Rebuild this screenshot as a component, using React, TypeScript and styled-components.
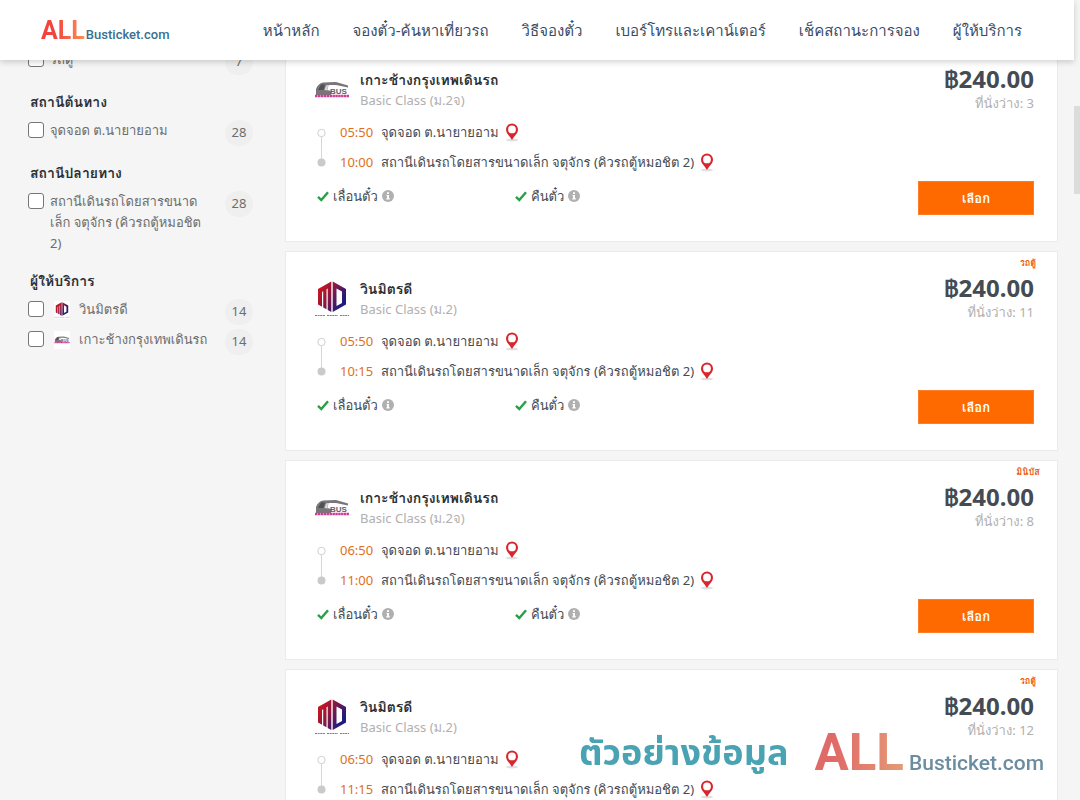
import React from 'react';
import styled, { createGlobalStyle } from 'styled-components';

const uiFont = '"Noto Sans", Loma, sans-serif';
const looplessFont = '"Noto Sans", "Noto Sans Thai", sans-serif';

const GlobalStyle = createGlobalStyle`
  *, *::before, *::after { box-sizing: border-box; }
  body {
    margin: 0;
    background: #f5f5f5;
    color: #444b52;
    font-family: ${uiFont};
    font-size: 13px;
  }
`;

const Shell = styled.div`
  height: 100vh;
  overflow: hidden;
  padding-right: 6px;
`;

const Header = styled.header`
  position: relative;
  z-index: 2;
  display: flex;
  align-items: center;
  justify-content: space-between;
  height: 60px;
  padding: 0 52px 0 41px;
  background: #fff;
  box-shadow: 0 2px 6px rgba(0, 0, 0, 0.18);
`;

const Brand = styled.a<{ $large?: boolean }>`
  display: flex;
  align-items: baseline;
  gap: ${p => (p.$large ? 5 : 1)}px;
  font-family: Roboto, sans-serif;
  font-weight: 500;
  font-size: ${p => (p.$large ? 21 : 13)}px;
  line-height: 1;
  color: ${p => (p.$large ? '#6b8da0' : '#3a6f90')};
  text-decoration: none;
  white-space: nowrap;
`;

const BrandAll = styled.span<{ $large?: boolean }>`
  font-weight: 700;
  font-size: ${p => (p.$large ? 51 : 25)}px;
  background: ${p =>
    p.$large
      ? 'linear-gradient(90deg, #e06a68 20%, #e49a76)'
      : 'linear-gradient(90deg, #f4423c 30%, #fb9058)'};
  background-clip: text;
  -webkit-background-clip: text;
  color: transparent;
`;

const Nav = styled.nav`
  display: flex;
  gap: 33px;
`;

const NavLink = styled.a`
  color: #3b4a66;
  font-size: 15px;
  line-height: 24px;
  text-decoration: none;
  white-space: nowrap;
`;

const Content = styled.div`
  display: flex;
  align-items: flex-start;
  gap: 32px;
  margin-top: -18px;
  padding: 0 16px 0 28px;
`;

const Sidebar = styled.aside`
  flex: 0 0 225px;
  padding-top: 7px;
`;

const FilterGroup = styled.section`
  margin-bottom: 13px;
`;

const FilterTitle = styled.h3`
  margin: 0 0 8px 2px;
  color: #2b2f33;
  font-size: 14px;
  line-height: 20px;
  font-weight: 700;
`;

const FilterRow = styled.label`
  display: flex;
  align-items: flex-start;
  min-height: 30px;
  padding-bottom: 4px;
  color: #6d6d6d;
  line-height: 21px;
`;

const Checkbox = styled.input`
  appearance: none;
  flex: none;
  width: 16px;
  height: 16px;
  margin: 2px 6px 0 0;
  border: 1px solid #767676;
  border-radius: 3px;
  background: #fff;
`;

const FilterLogo = styled.span`
  flex: none;
  display: flex;
  align-items: center;
  justify-content: center;
  width: 16px;
  height: 18px;
  margin: 2px 9px 0 4px;
  background: #fff;
`;

const FilterName = styled.span`
  flex: 1;
  min-width: 0;
  padding-right: 17px;
`;

const Count = styled.span`
  flex: none;
  width: 28px;
  height: 26px;
  border-radius: 13px;
  background: #efefef;
  line-height: 25px;
  text-align: center;
`;

const Results = styled.main`
  flex: 1;
  min-width: 0;
  display: flex;
  flex-direction: column;
  gap: 9px;
`;

const Card = styled.article`
  position: relative;
  display: flex;
  justify-content: space-between;
  min-height: 200px;
  padding: 0 23px 26px 28px;
  background: #fff;
  border: 1px solid #ebebeb;
`;

const Trip = styled.div`
  padding-top: 27px;
`;

const Provider = styled.div`
  display: flex;
  gap: 10px;
  height: 40px;
`;

const ProviderName = styled.h2`
  margin: 0;
  color: #2b2f33;
  font-size: 14px;
  line-height: 20px;
  font-weight: 700;
`;

const Muted = styled.p`
  margin: 0;
  color: #b0b0b0;
  line-height: 20px;
`;

const Route = styled.div`
  display: flex;
  gap: 14px;
  align-items: center;
  margin-top: 7px;
  padding-left: 3px;
`;

const Stop = styled.div`
  display: flex;
  align-items: center;
  height: 30px;
  white-space: nowrap;
`;

const Time = styled.time`
  width: 41px;
  color: #e0701c;
`;

const Place = styled.span`
  margin-right: 6px;
`;

const Perks = styled.div`
  display: grid;
  grid-template-columns: 198px 198px;
  margin-top: 4px;
  padding-left: 3px;
`;

const Perk = styled.span`
  display: flex;
  align-items: center;
  gap: 4px;
  height: 30px;
`;

const Booking = styled.div`
  display: flex;
  flex-direction: column;
  align-items: flex-end;
  padding-top: 22px;
`;

const VehicleTag = styled.span`
  position: absolute;
  top: 4px;
  right: 9px;
  width: 40px;
  color: #e8590c;
  font-size: 9px;
  line-height: 14px;
  font-weight: 700;
  text-align: center;
`;

const Price = styled.strong`
  color: #444b52;
  font-size: 24px;
  line-height: 28px;
`;

const SelectButton = styled.button`
  width: 116px;
  height: 34px;
  margin-top: auto;
  padding: 0;
  border: 1px solid #ff7d26;
  background: #ff6a00;
  color: #fff;
  font: 700 13px/20px ${uiFont};
`;

const ScrollThumb = styled.div`
  position: fixed;
  top: 106px;
  right: 0;
  width: 6px;
  height: 88px;
  background: #dcdcdc;
`;

const Watermark = styled.div`
  position: fixed;
  right: 36px;
  bottom: 18px;
  z-index: 1;
  display: flex;
  align-items: center;
  gap: 26px;
`;

const WatermarkText = styled.span`
  color: #4aa3b3;
  font-family: ${looplessFont};
  font-size: 36px;
  line-height: 60px;
  font-weight: 700;
  white-space: nowrap;
`;

type Company = 'win' | 'chang';

const WinLogo = ({ small }: { small?: boolean }) => (
  <svg width={small ? 16 : 36} height={small ? 18 : 40} viewBox="0 0 36 40" aria-hidden="true">
    <defs>
      <linearGradient id="win" x1="0" y1="0" x2="1" y2="0.6">
        <stop offset="0.1" stopColor="#d0141c" />
        <stop offset="0.5" stopColor="#8c1840" />
        <stop offset="0.95" stopColor="#1c1c80" />
      </linearGradient>
    </defs>
    <path
      fill="url(#win)"
      d="M4 10 17.300 2.500V33L13.700 31V9.500L12.500 10.200V30.300L9.200 28.500V12.200L8 13V27.800L4 25.500ZM18.700 2.500 32 10V25.500L18.700 33ZM22.500 9.500V27L28 24V12.500Z"
    />
    <path d="M1 36.500H11M13 36.500H24M26 36.500H35" stroke="#b8607c" strokeDasharray="2 .6" />
  </svg>
);

const ChangLogo = ({ small }: { small?: boolean }) => (
  <svg width={small ? 16 : 36} height={small ? 18 : 40} viewBox="0 0 36 40" aria-hidden="true">
    <path d="M2 25V19Q4 13.500 9 12.500L22 12 34 15.500V17.500L22 15 14.500 15 13.500 20 17 21V25Z" fill="#77777b" />
    <path d="M4 20 7 14.500H11L9.500 20Z" fill="#505055" />
    <path d="M12 15.500 14 15 13.500 20.500 10.500 20Z" fill="#d8d8dc" />
    <text x="16" y="24" fontFamily="Liberation Sans" fontWeight="700" fontSize="8" fill="#606068">BUS</text>
    <path d="M1 26H35" stroke="#d23c94" strokeWidth="2.500" strokeDasharray="2.500 .4" />
  </svg>
);

const CompanyLogo = ({ company, small }: { company: Company; small?: boolean }) =>
  company === 'win' ? <WinLogo small={small} /> : <ChangLogo small={small} />;

const Pin = () => (
  <svg width="14" height="19" viewBox="0 0 14 19" aria-hidden="true">
    <ellipse cx="7" cy="17" rx="6" ry="1.500" fill="#e0e0e0" />
    <path fillRule="evenodd" fill="#d9262e" d="M7 .5A6 6 0 0 0 1 6.500C1 10.500 4.500 12.500 7 17 9.500 12.500 13 10.500 13 6.500A6 6 0 0 0 7 .5ZM7 2.500A3.900 3.900 0 1 1 7 10.300 3.900 3.900 0 0 1 7 2.500Z" />
  </svg>
);

const Check = () => (
  <svg width="12" height="11" viewBox="0 0 12 11" aria-hidden="true">
    <path d="M1 5.800 4.300 9 11 1.200" fill="none" stroke="#28a045" strokeWidth="2.400" />
  </svg>
);

const Info = () => (
  <svg width="12" height="12" viewBox="0 0 12 12" aria-hidden="true">
    <circle cx="6" cy="6" r="6" fill="#b0b0b0" />
    <path d="M5 2.300H7V4H5ZM4.500 5H7V8.200H7.800V9.400H4.300V8.200H5.100V6.100H4.500Z" fill="#fff" />
  </svg>
);

const RouteLine = () => (
  <svg width="9" height="40" viewBox="0 0 9 40" aria-hidden="true">
    <path d="M4.500 10V32" stroke="#d6d6d6" />
    <circle cx="4.500" cy="6" r="3.700" fill="#fff" stroke="#d0d0d0" />
    <circle cx="4.500" cy="35.500" r="4" fill="#cacaca" />
  </svg>
);

const navItems = ['หน้าหลัก', 'จองตั๋ว-ค้นหาเที่ยวรถ', 'วิธีจองตั๋ว', 'เบอร์โทรและเคาน์เตอร์', 'เช็คสถานะการจอง', 'ผู้ให้บริการ'];

interface Filter {
  title?: string;
  options: { name: string; count: number; company?: Company }[];
}

const filters: Filter[] = [
  { options: [{ name: 'รถตู้', count: 7 }] },
  { title: 'สถานีต้นทาง', options: [{ name: 'จุดจอด ต.นายายอาม', count: 28 }] },
  { title: 'สถานีปลายทาง', options: [{ name: 'สถานีเดินรถโดยสารขนาดเล็ก จตุจักร (คิวรถตู้หมอชิต 2)', count: 28 }] },
  {
    title: 'ผู้ให้บริการ',
    options: [
      { name: 'วินมิตรดี', count: 14, company: 'win' },
      { name: 'เกาะช้างกรุงเทพเดินรถ', count: 14, company: 'chang' },
    ],
  },
];

interface TripInfo {
  company: Company;
  depart: string;
  arrive: string;
  seats: number;
}

const trips: TripInfo[] = [
  { company: 'chang', depart: '05:50', arrive: '10:00', seats: 3 },
  { company: 'win', depart: '05:50', arrive: '10:15', seats: 11 },
  { company: 'chang', depart: '06:50', arrive: '11:00', seats: 8 },
  { company: 'win', depart: '06:50', arrive: '11:15', seats: 12 },
];

const companies = {
  win: { name: 'วินมิตรดี', cls: 'Basic Class (ม.2)', tag: 'รถตู้' },
  chang: { name: 'เกาะช้างกรุงเทพเดินรถ', cls: 'Basic Class (ม.2จ)', tag: 'มินิบัส' },
};

const TripCard = ({ trip }: { trip: TripInfo }) => {
  const company = companies[trip.company];
  return (
    <Card>
      <Trip>
        <Provider>
          <CompanyLogo company={trip.company} />
          <div>
            <ProviderName>{company.name}</ProviderName>
            <Muted>{company.cls}</Muted>
          </div>
        </Provider>
        <Route>
          <RouteLine />
          <div>
            <Stop>
              <Time>{trip.depart}</Time>
              <Place>จุดจอด ต.นายายอาม</Place>
              <Pin />
            </Stop>
            <Stop>
              <Time>{trip.arrive}</Time>
              <Place>สถานีเดินรถโดยสารขนาดเล็ก จตุจักร (คิวรถตู้หมอชิต 2)</Place>
              <Pin />
            </Stop>
          </div>
        </Route>
        <Perks>
          <Perk><Check />เลื่อนตั๋ว<Info /></Perk>
          <Perk><Check />คืนตั๋ว<Info /></Perk>
        </Perks>
      </Trip>
      <VehicleTag>{company.tag}</VehicleTag>
      <Booking>
        <Price>฿240.00</Price>
        <Muted>ที่นั่งว่าง: {trip.seats}</Muted>
        <SelectButton type="button">เลือก</SelectButton>
      </Booking>
    </Card>
  );
};

export default function App() {
  return (
    <Shell>
      <GlobalStyle />
      <Header>
        <Brand href="#"><BrandAll>ALL</BrandAll>Busticket.com</Brand>
        <Nav>
          {navItems.map(item => <NavLink key={item} href="#">{item}</NavLink>)}
        </Nav>
      </Header>
      <Content>
        <Sidebar>
          {filters.map((group, i) => (
            <FilterGroup key={i}>
              {group.title && <FilterTitle>{group.title}</FilterTitle>}
              {group.options.map(option => (
                <FilterRow key={option.name}>
                  <Checkbox type="checkbox" />
                  {option.company && <FilterLogo><CompanyLogo company={option.company} small /></FilterLogo>}
                  <FilterName>{option.name}</FilterName>
                  <Count>{option.count}</Count>
                </FilterRow>
              ))}
            </FilterGroup>
          ))}
        </Sidebar>
        <Results>
          {trips.map((trip, i) => <TripCard key={i} trip={trip} />)}
        </Results>
      </Content>
      <ScrollThumb />
      <Watermark>
        <WatermarkText>ตัวอย่างข้อมูล</WatermarkText>
        <Brand as="span" $large><BrandAll $large>ALL</BrandAll>Busticket.com</Brand>
      </Watermark>
    </Shell>
  );
}
